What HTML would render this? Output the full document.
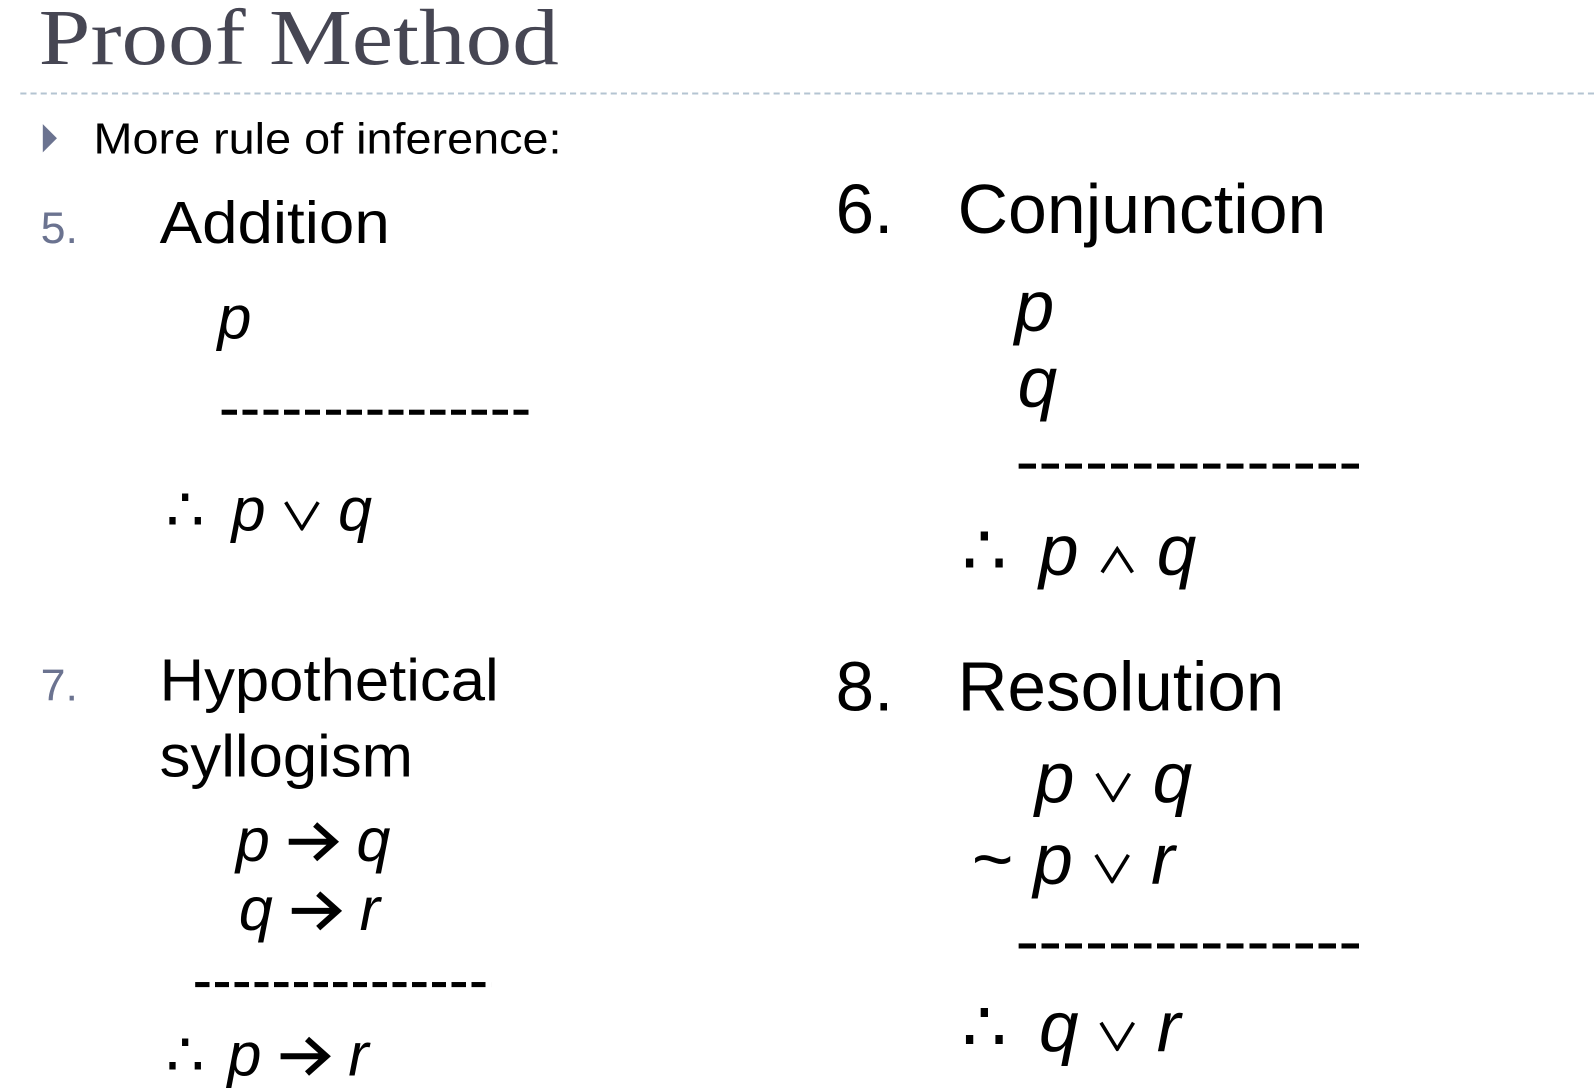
<!DOCTYPE html>
<html><head><meta charset="utf-8"><style>
html,body{margin:0;padding:0;background:#fff;}
body{width:1594px;height:1082px;position:relative;overflow:hidden;font-family:"Liberation Sans",sans-serif;color:#000;}
#w{position:absolute;left:0;top:0;width:1568px;height:1064px;transform:scale(1.0166);transform-origin:0 0;}
.a{position:absolute;line-height:1;white-space:nowrap;transform-origin:0 0;}
i{font-style:italic;}
.d{position:absolute;height:5px;}
.ar,.v{display:inline-block;vertical-align:0;}
.ar{vertical-align:-2px;}
</style></head><body><div id="w">
<div class="a" style="left:38px;top:-2px;font-family:'Liberation Serif',serif;font-size:78px;color:#464653;transform:scaleX(1.175);">Proof Method</div>
<div style="position:absolute;left:20px;top:91px;width:1548px;height:0;border-top:2px dashed #b4c4d2;"></div>
<svg style="position:absolute;left:42px;top:122px" width="16" height="30"><polygon points="0,0 14,14 0,28" fill="#6b7390"/></svg>
<div class="a" style="left:92px;top:116px;font-size:43px;transform:scaleX(1.07);">More rule of inference:</div>

<div class="a" style="left:40px;top:203px;font-size:44px;color:#6b7390;">5.</div>
<div class="a" style="left:157px;top:191px;font-size:58px;transform:scaleX(1.08);">Addition</div>
<div class="a" style="left:214px;top:283px;font-size:60px;"><i>p</i></div>
<div class="d" style="left:218px;top:403px;width:307px;background:repeating-linear-gradient(90deg,#000 0 15px,transparent 15px 20.5px);"></div>
<div class="a" style="left:163px;top:472px;font-size:60px;">∴ <i style="margin-left:10px">p</i> <svg class="v" width="38" height="30"><path d="M3 2L19 28L35 2" fill="none" stroke="#000" stroke-width="3.5"/></svg> <i>q</i></div>

<div class="a" style="left:822px;top:172px;font-size:68px;">6.</div>
<div class="a" style="left:942px;top:172px;font-size:68px;transform:scaleX(1.01);">Conjunction</div>
<div class="a" style="left:998px;top:266px;font-size:70px;"><i>p</i></div>
<div class="a" style="left:1001px;top:341px;font-size:70px;"><i>q</i></div>
<div class="d" style="left:1002px;top:456px;width:340px;background:repeating-linear-gradient(90deg,#000 0 17px,transparent 17px 22.7px);"></div>
<div class="a" style="left:946px;top:506px;font-size:70px;">∴ <i style="margin-left:12px">p</i> <svg class="v" width="38" height="28"><path d="M4 26L19 3L34 26" fill="none" stroke="#000" stroke-width="3.5"/></svg> <i>q</i></div>

<div class="a" style="left:40px;top:653px;font-size:44px;color:#6b7390;">7.</div>
<div class="a" style="left:157px;top:641px;font-size:58px;transform:scaleX(1.045);">Hypothetical</div>
<div class="a" style="left:157px;top:716px;font-size:58px;transform:scaleX(1.045);">syllogism</div>
<div class="a" style="left:232px;top:797px;font-size:60px;"><i>p</i> <svg class="ar" width="52" height="42"><path d="M2 21H46M28 4L47 21L28 38" fill="none" stroke="#000" stroke-width="6"/></svg> <i>q</i></div>
<div class="a" style="left:235px;top:865px;font-size:60px;"><i>q</i> <svg class="ar" width="52" height="42"><path d="M2 21H46M28 4L47 21L28 38" fill="none" stroke="#000" stroke-width="6"/></svg> <i>r</i></div>
<div class="d" style="left:192px;top:966px;width:291px;background:repeating-linear-gradient(90deg,#000 0 14px,transparent 14px 19.4px);"></div>
<div class="a" style="left:163px;top:1008px;font-size:60px;">∴ <i style="margin-left:6px">p</i> <svg class="ar" width="52" height="42"><path d="M2 21H46M28 4L47 21L28 38" fill="none" stroke="#000" stroke-width="6"/></svg> <i>r</i></div>

<div class="a" style="left:822px;top:642px;font-size:68px;">8.</div>
<div class="a" style="left:942px;top:642px;font-size:68px;">Resolution</div>
<div class="a" style="left:1018px;top:730px;font-size:70px;"><i>p</i> <svg class="v" width="38" height="30"><path d="M3 2L19 28L35 2" fill="none" stroke="#000" stroke-width="3.5"/></svg> <i>q</i></div>
<div class="a" style="left:956px;top:810px;font-size:70px;">~ <i>p</i> <svg class="v" width="38" height="30"><path d="M3 2L19 28L35 2" fill="none" stroke="#000" stroke-width="3.5"/></svg> <i>r</i></div>
<div class="d" style="left:1002px;top:928px;width:340px;background:repeating-linear-gradient(90deg,#000 0 17px,transparent 17px 22.7px);"></div>
<div class="a" style="left:946px;top:975px;font-size:70px;">∴ <i style="margin-left:12px">q</i> <svg class="v" width="38" height="30"><path d="M3 2L19 28L35 2" fill="none" stroke="#000" stroke-width="3.5"/></svg> <i>r</i></div>
</div></body></html>
